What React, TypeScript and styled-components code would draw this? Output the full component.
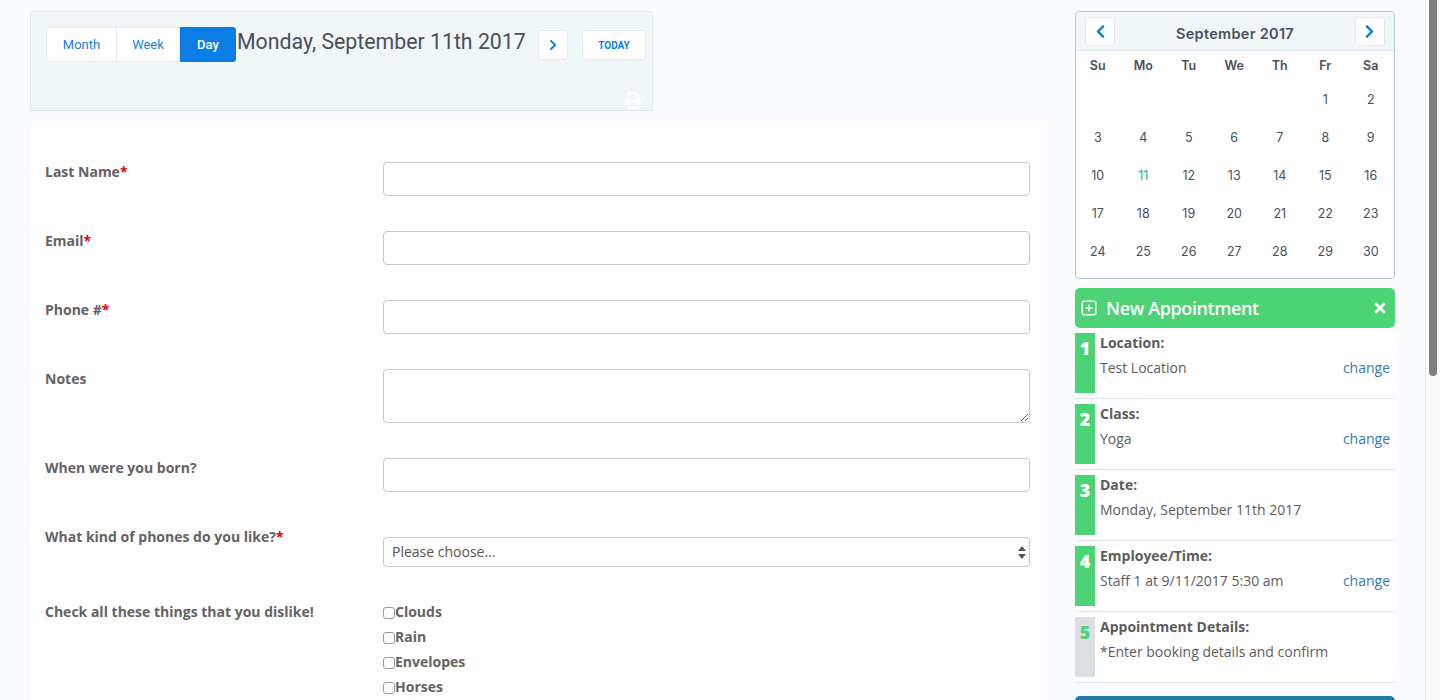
import styled, { createGlobalStyle } from "styled-components";
import { FaChevronLeft, FaChevronRight, FaTimes } from "react-icons/fa";
import { FiPlusSquare } from "react-icons/fi";

const GlobalStyle = createGlobalStyle`
  html, body {
    margin: 0;
    height: 700px;
    overflow: hidden;
    background: #fbfcff;
  }
  * {
    box-sizing: border-box;
  }
`;

const Page = styled.div`
  position: relative;
  height: 700px;
  overflow: hidden;
  display: flex;
  align-items: flex-start;
  gap: 28px;
  padding: 11px 0 0 30px;
  font-family: "Open Sans", sans-serif;
  color: #5c5c5c;
`;

const Main = styled.main`
  width: 1017px;
  flex: none;
`;

const Side = styled.aside`
  width: 320px;
  flex: none;
`;

const Toolbar = styled.div`
  position: relative;
  width: 623px;
  height: 100px;
  display: flex;
  align-items: flex-start;
  padding: 15px 0 0 15px;
  background: #f1f6f9;
  border: 1px solid #e1e9f0;
  border-radius: 3px 3px 0 0;
  font-family: Inter, Roboto, sans-serif;
`;

const ViewGroup = styled.div`
  display: flex;
  height: 35px;
  flex: none;
`;

const ViewButton = styled.button<{ $active?: boolean; $width: number }>`
  width: ${(p) => p.$width}px;
  padding: 0;
  font-family: Roboto, sans-serif;
  font-size: 13px;
  font-weight: ${(p) => (p.$active ? 500 : 400)};
  color: ${(p) => (p.$active ? "#fff" : "#0f7fe0")};
  background: ${(p) => (p.$active ? "#0a7ee4" : "#fff")};
  border: 1px solid ${(p) => (p.$active ? "#0a7ee4" : "#e4e9ee")};
  border-left-width: ${(p) => (p.$active ? "1px" : "0")};
  border-radius: ${(p) => (p.$active ? "0 3px 3px 0" : "0")};

  &:first-child {
    border-left-width: 1px;
    border-radius: 3px 0 0 3px;
  }
`;

const DateTitle = styled.h2`
  margin: 0 0 0 1px;
  width: 301px;
  flex: none;
  font-family: Roboto, sans-serif;
  font-size: 21.3px;
  line-height: 30px;
  font-weight: 400;
  color: #48505c;
  white-space: nowrap;
`;

const NavButton = styled.button`
  width: 30px;
  height: 30px;
  flex: none;
  display: flex;
  align-items: center;
  justify-content: center;
  padding: 0;
  margin-top: 3px;
  color: #0a7ee4;
  background: #fff;
  border: 1px solid #e4e9ee;
  border-radius: 3px;
  font-size: 12px;
`;

const TodayButton = styled.button`
  width: 64px;
  height: 30px;
  flex: none;
  margin: 3px 0 0 14px;
  padding: 0;
  font-family: Roboto, sans-serif;
  font-size: 10px;
  font-weight: 700;
  color: #0a7ee4;
  background: #fff;
  border: 1px solid #e4e9ee;
  border-radius: 3px;
`;

const PrintIcon = styled.svg`
  position: absolute;
  right: 10px;
  bottom: 2px;
`;

const FormPanel = styled.form`
  height: 576px;
  margin-top: 13px;
  padding: 38px 17px 0 15px;
  background: #fff;
`;

const FormRow = styled.div`
  display: grid;
  grid-template-columns: 338px 647px;
  margin-bottom: 35px;
`;

const FieldLabel = styled.label`
  font-size: 14px;
  line-height: 20px;
  font-weight: 700;
  color: #636363;
`;

const Req = styled.span`
  color: #f00000;
`;

const TextInput = styled.input`
  display: block;
  width: 100%;
  height: 34px;
  background: #fff;
  border: 1px solid #c8c8c8;
  border-radius: 4px;
`;

const TextArea = styled.textarea`
  display: block;
  width: 100%;
  height: 54px;
  background: #fff;
  border: 1px solid #c8c8c8;
  border-radius: 4px;
`;

const SelectBox = styled.div`
  position: relative;
  height: 30px;
  margin-top: 10px;
  padding-left: 8px;
  font-size: 14px;
  line-height: 28px;
  color: #555;
  background: #fff;
  border: 1px solid #c8c8c8;
  border-radius: 4px;
`;

const SelectArrows = styled.svg`
  position: absolute;
  right: 3px;
  top: 8px;
`;

const Checks = styled.div`
  display: flex;
  flex-direction: column;
  gap: 5px;
`;

const CheckLabel = styled.label`
  display: flex;
  align-items: center;
  font-size: 14px;
  line-height: 20px;
  font-weight: 700;
  color: #636363;
`;

const CheckBox = styled.span`
  width: 12px;
  height: 12px;
  flex: none;
  margin-top: 2px;
  background: #fff;
  border: 1px solid #999;
  border-radius: 3px;
`;

const Calendar = styled.section`
  height: 268px;
  background: #fff;
  border: 1px solid #a9c9de;
  border-radius: 4px;
  font-family: Inter, Roboto, sans-serif;
  color: #48505c;
`;

const CalendarHead = styled.div`
  height: 39px;
  display: flex;
  align-items: flex-start;
  justify-content: space-between;
  padding: 5px 9px 0;
  background: #f1f6f9;
  border-bottom: 1px solid #dbe6ef;
  border-radius: 3px 3px 0 0;
`;

const CalendarNav = styled.button`
  width: 30px;
  height: 29px;
  display: flex;
  align-items: center;
  justify-content: center;
  padding: 0;
  font-size: 15px;
  color: #0a7ee4;
  background: #fff;
  border: 1px solid #e4e9ee;
  border-radius: 3px;
`;

const CalendarTitle = styled.div`
  font-size: 14.5px;
  line-height: 33px;
  font-weight: 600;
  letter-spacing: 0.3px;
`;

const CalendarGrid = styled.div`
  display: grid;
  grid-template-columns: repeat(7, 45.5px);
  grid-template-rows: 30px;
  grid-auto-rows: 38px;
  margin-left: -1px;
`;

const WeekdayCell = styled.div`
  text-align: center;
  font-size: 12.5px;
  line-height: 29px;
  font-weight: 600;
`;

const DayCell = styled.div<{ $today?: boolean }>`
  text-align: center;
  font-size: 12.5px;
  line-height: 38px;
  color: ${(p) => (p.$today ? "#2ab27b" : "#48505c")};
`;

const AppointmentBar = styled.div`
  height: 40px;
  margin-top: 9px;
  display: flex;
  align-items: center;
  padding: 0 7px 0 5px;
  color: #fff;
  background: #4cd376;
  border-radius: 5px;
`;

const BarTitle = styled.div`
  flex: 1;
  margin-left: 8px;
  font-size: 18px;
  font-weight: 600;
  letter-spacing: -0.4px;
`;

const Step = styled.div`
  display: flex;
  height: 71px;
  padding: 5px 0;
  background: #fff;
  border-bottom: 1px solid #dfe4e9;
`;

const StepNumber = styled.div<{ $pending?: boolean }>`
  width: 20px;
  height: 60px;
  flex: none;
  text-align: center;
  font-size: 18px;
  line-height: 30px;
  font-weight: 800;
  color: ${(p) => (p.$pending ? "#4cd376" : "#fff")};
  background: ${(p) => (p.$pending ? "#dbdfe2" : "#4cd376")};
`;

const StepBody = styled.div`
  flex: 1;
  padding: 0 5px;
  font-size: 14px;
  line-height: 20px;
`;

const StepTitle = styled.div`
  font-weight: 700;
`;

const StepValue = styled.div`
  display: flex;
  justify-content: space-between;
  margin-top: 5px;
`;

const ChangeLink = styled.a`
  color: #337ab7;
`;

const ConfirmButton = styled.div`
  height: 40px;
  margin-top: 13px;
  background: #1f7ba6;
  border-radius: 5px;
`;

const ScrollTrack = styled.div`
  position: absolute;
  top: 0;
  right: 0;
  bottom: 0;
  width: 15px;
  background: #fafafa;
  border-left: 1px solid #e8e8e8;
`;

const ScrollThumb = styled.div`
  width: 8px;
  height: 376px;
  margin-left: 3px;
  background: #7f7f7f;
  border-radius: 0 0 4px 4px;
`;

const weekdays = ["Su", "Mo", "Tu", "We", "Th", "Fr", "Sa"];
const days = [
  "", "", "", "", "", "1", "2",
  "3", "4", "5", "6", "7", "8", "9",
  "10", "11", "12", "13", "14", "15", "16",
  "17", "18", "19", "20", "21", "22", "23",
  "24", "25", "26", "27", "28", "29", "30",
];

const steps = [
  { title: "Location:", value: "Test Location", change: true },
  { title: "Class:", value: "Yoga", change: true },
  { title: "Date:", value: "Monday, September 11th 2017", change: false },
  { title: "Employee/Time:", value: "Staff 1 at 9/11/2017 5:30 am", change: true },
  { title: "Appointment Details:", value: "*Enter booking details and confirm", change: false, pending: true },
];

const App = () => {
  return (
    <Page>
      <GlobalStyle />
      <Main>
        <Toolbar>
          <ViewGroup>
            <ViewButton $width={71}>Month</ViewButton>
            <ViewButton $width={63}>Week</ViewButton>
            <ViewButton $width={56} $active>Day</ViewButton>
          </ViewGroup>
          <DateTitle>Monday, September 11th 2017</DateTitle>
          <NavButton><FaChevronRight /></NavButton>
          <TodayButton>TODAY</TodayButton>
          <PrintIcon width="17" height="16" viewBox="0 0 17 16">
            <path
              fill="#fff"
              fillRule="evenodd"
              d="M3 0H11L14 3V7H16Q17 7 17 8V12H14V16H3V12H0V8Q0 7 1 7H3ZM4.5 1.5V8H12.5V4H10V1.5ZM4.5 11V14.5H12.5V11Z"
            />
          </PrintIcon>
        </Toolbar>
        <FormPanel>
          <FormRow>
            <FieldLabel>Last Name<Req>*</Req></FieldLabel>
            <TextInput />
          </FormRow>
          <FormRow>
            <FieldLabel>Email<Req>*</Req></FieldLabel>
            <TextInput />
          </FormRow>
          <FormRow>
            <FieldLabel>Phone #<Req>*</Req></FieldLabel>
            <TextInput />
          </FormRow>
          <FormRow>
            <FieldLabel>Notes</FieldLabel>
            <TextArea />
          </FormRow>
          <FormRow>
            <FieldLabel>When were you born?</FieldLabel>
            <TextInput />
          </FormRow>
          <FormRow>
            <FieldLabel>What kind of phones do you like?<Req>*</Req></FieldLabel>
            <SelectBox>
              Please choose...
              <SelectArrows width="8" height="13" viewBox="0 0 8 13">
                <path d="M4 0 L8 5 L0 5 Z M0 8 L8 8 L4 13 Z" fill="#555" />
              </SelectArrows>
            </SelectBox>
          </FormRow>
          <FormRow>
            <FieldLabel>Check all these things that you dislike!</FieldLabel>
            <Checks>
              {["Clouds", "Rain", "Envelopes", "Horses"].map((name) => (
                <CheckLabel key={name}>
                  <CheckBox />
                  {name}
                </CheckLabel>
              ))}
            </Checks>
          </FormRow>
        </FormPanel>
      </Main>
      <Side>
        <Calendar>
          <CalendarHead>
            <CalendarNav><FaChevronLeft /></CalendarNav>
            <CalendarTitle>September 2017</CalendarTitle>
            <CalendarNav><FaChevronRight /></CalendarNav>
          </CalendarHead>
          <CalendarGrid>
            {weekdays.map((d) => (
              <WeekdayCell key={d}>{d}</WeekdayCell>
            ))}
            {days.map((d, i) => (
              <DayCell key={i} $today={d === "11"}>{d}</DayCell>
            ))}
          </CalendarGrid>
        </Calendar>
        <AppointmentBar>
          <FiPlusSquare size={18} />
          <BarTitle>New Appointment</BarTitle>
          <FaTimes size={16} />
        </AppointmentBar>
        {steps.map((s, i) => (
          <Step key={s.title}>
            <StepNumber $pending={s.pending}>{i + 1}</StepNumber>
            <StepBody>
              <StepTitle>{s.title}</StepTitle>
              <StepValue>
                {s.value}
                {s.change && <ChangeLink>change</ChangeLink>}
              </StepValue>
            </StepBody>
          </Step>
        ))}
        <ConfirmButton />
      </Side>
      <ScrollTrack>
        <ScrollThumb />
      </ScrollTrack>
    </Page>
  );
};

export default App;
